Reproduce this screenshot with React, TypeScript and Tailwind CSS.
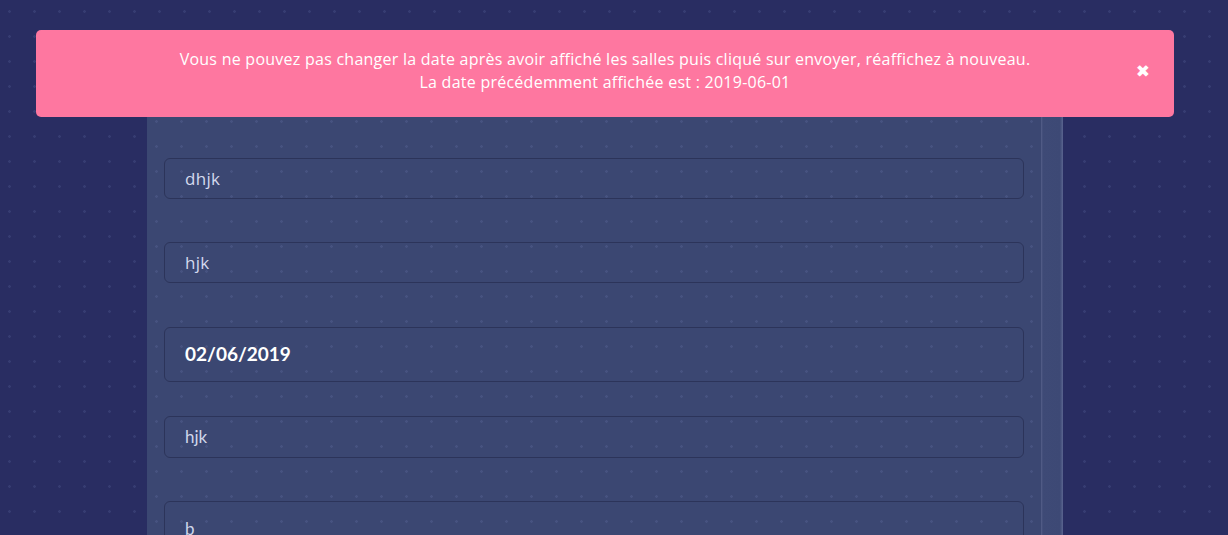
import React from "react";

const dots =
  "bg-[radial-gradient(circle,rgba(130,140,200,0.16)_1px,transparent_1.6px)] bg-[length:25px_25px] bg-[position:-3px_-1px]";

function Field({
  value,
  h,
  className,
  textClass,
}: {
  value: string;
  h: string;
  className?: string;
  textClass: string;
}) {
  return (
    <div
      className={`mx-[17px] ${h} rounded-[6px] border border-[#2c345a] flex items-center pl-[20px] ${className ?? ""}`}
    >
      <span className={textClass}>{value}</span>
    </div>
  );
}

export default function App() {
  const poppins = "font-['Open_Sans',sans-serif] text-[17px] tracking-[0.3px] text-[#d3d9ee]";
  const lato = "font-['Lato',sans-serif] text-[17px] text-[#cfd6ea]";
  return (
    <div className={`relative w-[1228px] h-[535px] overflow-hidden bg-[#292d62] ${dots}`}>
      <div className="flex pt-[60px] pl-[147px]">
        <div className={`w-[894px] h-[600px] bg-[#3b4772] ${dots} pt-[98px]`}>
          <Field value="dhjk" h="h-[41px]" textClass={poppins} />
          <Field value="hjk" h="h-[41px]" className="mt-[43px]" textClass={poppins} />
          <Field
            value="02/06/2019"
            h="h-[55px]"
            className="mt-[44px]"
            textClass="font-['Lato',sans-serif] font-bold text-[19px] text-white"
          />
          <Field value="hjk" h="h-[42px]" className="mt-[34px]" textClass={lato} />
          <Field value="b" h="h-[60px]" className="mt-[43px] items-start pt-[14px]" textClass={lato} />
        </div>
        <div className="w-[22px] h-[600px] bg-[linear-gradient(90deg,#56608a_0px,#3e4a76_2px,#3d4975_19px,#5b6590_22px)]" />
      </div>

      <div className="absolute left-[36px] top-[30px] w-[1138px] h-[87px] rounded-[5px] bg-[#fe77a0] flex items-center justify-center">
        <div className="font-['Open_Sans',sans-serif] text-[16px] tracking-[0.25px] leading-[23px] text-white text-center -mt-[6px]">
          <div>Vous ne pouvez pas changer la date après avoir affiché les salles puis cliqué sur envoyer, réaffichez à nouveau.</div>
          <div>La date précédemment affichée est : 2019-06-01</div>
        </div>
        <div className="absolute right-[24px] top-[33px] text-white font-bold text-[17px] leading-none font-['DejaVu_Sans',sans-serif]">
          ✖
        </div>
      </div>
    </div>
  );
}
